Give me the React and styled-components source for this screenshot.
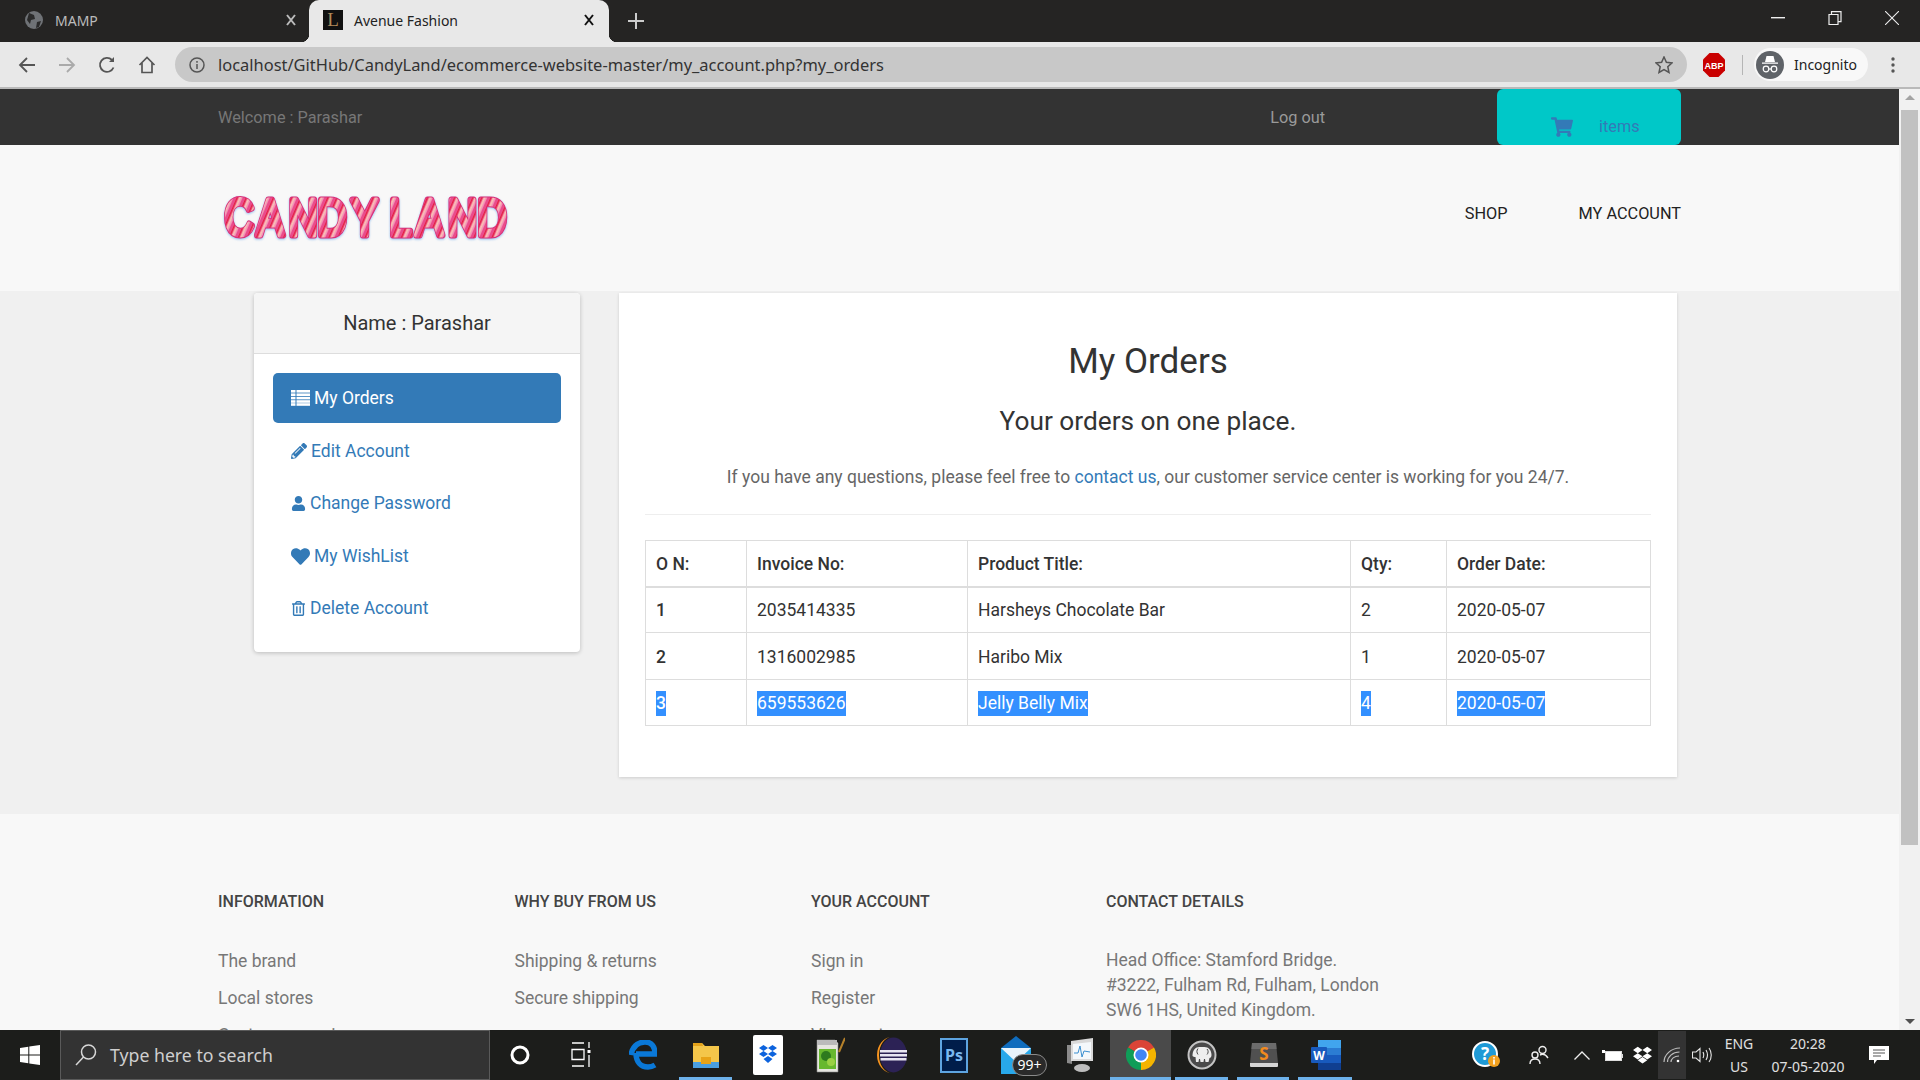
import React from "react";
import styled, { createGlobalStyle } from "styled-components";
import { FaPencilAlt, FaUser, FaHeart, FaRegTrashAlt, FaShoppingCart } from "react-icons/fa";

const GlobalStyle = createGlobalStyle`
  html, body { margin: 0; height: 100%; overflow: hidden; background: #f8f8f8; }
  * { box-sizing: border-box; }
`;

const winFont = `"Noto Sans", "Open Sans", sans-serif`;
const pageFont = `Roboto, "Liberation Sans", sans-serif`;

const Screen = styled.div`
  height: 1080px;
  display: flex;
  flex-direction: column;
  font-family: ${pageFont};
  font-size: 17.5px;
  line-height: 25px;
  color: #333;
`;

/* browser frame */
const TabStrip = styled.div`
  height: 42px;
  background: #252423;
  display: flex;
  align-items: stretch;
  font-family: ${winFont};
  font-size: 14px;
  flex-shrink: 0;
`;

const Tab = styled.div`
  position: relative;
  width: ${p => (p.$active ? "300px" : "309px")};
  display: flex;
  align-items: center;
  padding: ${p => (p.$active ? "0 15px 2px 14px" : "0 13px 2px 24px")};
  gap: 11px;
  color: ${p => (p.$active ? "#222" : "#bbb")};
  background: ${p => (p.$active ? "#e8e8e8" : "transparent")};
  border-radius: 10px 10px 0 0;
  ${p => p.$active && `
    &::before, &::after {
      content: "";
      position: absolute;
      bottom: 0;
      width: 8px;
      height: 8px;
    }
    &::before { left: -8px; background: radial-gradient(circle at 0 0, transparent 8px, #e8e8e8 8.5px); }
    &::after { right: -8px; background: radial-gradient(circle at 100% 0, transparent 8px, #e8e8e8 8.5px); }
  `}
`;

const TabTitle = styled.span`
  flex: 1;
`;

const Favicon = styled.span`
  width: 20px;
  height: 20px;
  background: #111;
  color: #b08a5a;
  font-family: "Liberation Serif", serif;
  font-size: 19px;
  line-height: 20px;
  text-align: center;
`;

const NewTab = styled.div`
  width: 54px;
  display: flex;
  align-items: center;
  justify-content: center;
`;

const WindowControls = styled.div`
  margin-left: auto;
  display: flex;
  align-items: flex-start;
`;

const WinButton = styled.div`
  width: 57px;
  height: 36px;
  display: flex;
  align-items: center;
  justify-content: center;
`;

const Toolbar = styled.div`
  height: 47px;
  flex-shrink: 0;
  background: #e8e8e8;
  border-bottom: 2px solid #b9b9b9;
  display: flex;
  align-items: center;
  padding: 0 0 0 7px;
`;

const NavBtn = styled.div`
  width: 40px;
  display: flex;
  justify-content: center;
`;

const Omnibox = styled.div`
  width: 1512px;
  height: 35px;
  margin-left: 8px;
  border-radius: 18px;
  background: #c8c8c8;
  display: flex;
  align-items: center;
  padding: 0 14px;
  font-family: ${winFont};
  font-size: 16.45px;
  color: #333;
`;

const Url = styled.span`
  margin-left: 13px;
  flex: 1;
`;

const ExtArea = styled.div`
  display: flex;
  align-items: center;
  margin-left: 16px;
`;

const Divider = styled.div`
  width: 1px;
  height: 20px;
  background: #b5b5b5;
  margin: 0 11px 0 17px;
`;

const IncognitoPill = styled.div`
  width: 114px;
  height: 33px;
  background: #f8f8f8;
  border-radius: 17px;
  display: flex;
  align-items: center;
  gap: 10px;
  padding-left: 2px;
  font-family: ${winFont};
  font-size: 14px;
  color: #222;
`;

const Dots = styled.div`
  margin-left: 23px;
  display: flex;
`;

/* page viewport */
const Viewport = styled.div`
  flex: 1;
  min-height: 0;
  display: flex;
`;

const Page = styled.div`
  flex: 1;
  min-width: 0;
  overflow: hidden;
`;

const Scrollbar = styled.div`
  width: 21px;
  background: #f1f1f1;
  display: flex;
  flex-direction: column;
  align-items: center;
  padding: 6px 0;
`;

const ScrollArrow = styled.div`
  width: 0;
  height: 0;
  border-left: 5px solid transparent;
  border-right: 5px solid transparent;
  ${p => (p.$down ? "border-top: 5px solid #505050;" : "border-bottom: 5px solid #a3a3a3;")}
`;

const ScrollThumb = styled.div`
  width: 17px;
  height: 735px;
  margin-top: 10px;
  margin-bottom: auto;
  background: #c1c1c1;
`;

const Container = styled.div`
  width: 1463px;
  margin: 0 auto;
`;

const TopBar = styled.div`
  height: 56px;
  background: #333;
  color: #777;
  font-size: 16.3px;
`;

const TopRow = styled(Container)`
  height: 100%;
  display: flex;
  align-items: center;
`;

const Welcome = styled.span`
  flex: 1;
`;

const LogOut = styled.span`
  color: #9a9a9a;
  margin-right: 172px;
`;

const CartBox = styled.div`
  width: 184px;
  height: 56px;
  background: #00c8c8;
  border-radius: 6px;
  display: flex;
  align-items: center;
  padding: 19px 0 0 54px;
  gap: 26px;
  color: #337ab7;
`;

const Header = styled.div`
  height: 146px;
  background: #f8f8f8;
`;

const HeaderRow = styled(Container)`
  height: 100%;
  display: flex;
  align-items: center;
  justify-content: space-between;
`;

const Logo = styled.svg`
  margin: 0 0 3px 2px;
  display: block;
  filter: drop-shadow(0 1px 1px rgba(110, 170, 235, 0.7));
`;

const Nav = styled.nav`
  display: flex;
  gap: 71px;
  padding-bottom: 10px;
  font-size: 16.3px;
  color: #222;
`;

const Content = styled.div`
  height: 523px;
  background: #f0f0f0;
  padding-top: 2px;
`;

const ContentRow = styled(Container)`
  display: flex;
  align-items: flex-start;
  padding-left: 36px;
  gap: 39px;
`;

const Sidebar = styled.aside`
  width: 326px;
  height: 359px;
  background: #fff;
  border-radius: 4px;
  box-shadow: 0 1px 4px rgba(0, 0, 0, 0.22);
  overflow: hidden;
`;

const SidebarHead = styled.div`
  height: 61px;
  background: #f5f5f5;
  border-bottom: 1px solid #ddd;
  display: flex;
  align-items: center;
  justify-content: center;
  font-size: 20px;
  color: #333;
`;

const Pills = styled.div`
  padding: 19px 19px;
  display: flex;
  flex-direction: column;
  gap: 2.5px;
`;

const Pill = styled.a`
  height: 50px;
  display: flex;
  align-items: center;
  gap: 4px;
  padding: ${p => (p.$active ? "0" : "1px")} 0 0 18px;
  border-radius: 5px;
  color: ${p => (p.$active ? "#fff" : "#337ab7")};
  background: ${p => (p.$active ? "#337ab7" : "transparent")};
`;

const Panel = styled.main`
  width: 1058px;
  height: 484px;
  background: #fff;
  box-shadow: 0 1px 3px rgba(0, 0, 0, 0.15);
  padding: 0 26px;
`;

const Title = styled.h1`
  margin: 0;
  padding-top: 44px;
  font-size: 35px;
  line-height: 50px;
  font-weight: 400;
  text-align: center;
  color: #333;
`;

const Subtitle = styled.h3`
  margin: 0;
  padding-top: 19px;
  font-size: 26.25px;
  line-height: 30px;
  font-weight: 400;
  text-align: center;
  color: #333;
`;

const Lead = styled.p`
  margin: 0;
  padding-top: 29px;
  text-align: center;
  color: #666;
`;

const InlineLink = styled.a`
  color: #337ab7;
`;

const Rule = styled.hr`
  margin: 24px 0 25px;
  border: 0;
  border-top: 1px solid #eee;
`;

const OrdersTable = styled.table`
  width: 1005px;
  table-layout: fixed;
  border-collapse: collapse;
`;

const Th = styled.th`
  height: 46px;
  padding: 2px 10px 0;
  text-align: left;
  font-weight: 500;
  border: 1px solid #ddd;
  border-bottom: 2px solid #ddd;
`;

const Td = styled.td`
  height: 46.4px;
  padding: 2px 10px 0;
  border: 1px solid #ddd;
  font-weight: ${p => (p.$bold ? 500 : 400)};
`;

const Selected = styled.span`
  display: inline-block;
  line-height: 25px;
  background: #3390ff;
  color: #fff;
`;

const Footer = styled.footer`
  background: #f8f8f8;
  padding-top: 75px;
`;

const FooterGrid = styled(Container)`
  display: grid;
  grid-template-columns: 296.5px 296.5px 295px 1fr;
`;

const FooterTitle = styled.h4`
  margin: 0 0 35px;
  font-size: 16px;
  line-height: 25px;
  font-weight: 500;
  color: #444;
`;

const FooterList = styled.div`
  display: flex;
  flex-direction: column;
  gap: 12px;
  color: #777;
`;

const Address = styled.div`
  margin-top: -1px;
  color: #777;
`;

/* taskbar */
const Taskbar = styled.div`
  height: 50px;
  flex-shrink: 0;
  background: #1c1d1b;
  display: flex;
  align-items: stretch;
  font-family: ${winFont};
  color: #e6e6e6;
`;

const StartButton = styled.div`
  width: 60px;
  display: flex;
  align-items: center;
  justify-content: center;
`;

const SearchBox = styled.div`
  width: 430px;
  background: #333;
  border: 1px solid #5a5a5a;
  display: flex;
  align-items: center;
  gap: 13px;
  padding-left: 14px;
  font-size: 17.7px;
  color: #cfcfcf;
`;

const Slot = styled.div`
  position: relative;
  width: ${p => p.$w || 62}px;
  display: flex;
  align-items: center;
  justify-content: center;
  background: ${p => (p.$active ? "#4a4a4a" : "transparent")};
  ${p => p.$open && `
    &::after {
      content: "";
      position: absolute;
      bottom: 0;
      left: ${p.$active ? 0 : 4}px;
      right: ${p.$active ? 0 : 5}px;
      height: 3px;
      background: #6db1ea;
    }
  `}
`;

const Badge = styled.span`
  position: absolute;
  right: 1px;
  top: 24px;
  width: 35px;
  height: 22px;
  border-radius: 11px;
  border: 1px solid #8a8a8a;
  background: #2a2a2a;
  color: #fff;
  font-size: 14px;
  line-height: 20px;
  text-align: center;
`;

const Tray = styled.div`
  margin-left: auto;
  margin-right: 18px;
  display: flex;
  align-items: stretch;
`;

const WifiSlot = styled(Slot)`
  background: #333;
  margin: 1px 0;
`;

const TwoLines = styled.div`
  width: ${p => p.$w}px;
  display: flex;
  flex-direction: column;
  align-items: center;
  justify-content: center;
  font-size: 14px;
  line-height: 23px;
  color: #e0e0e0;
`;

const ListIcon = () => (
  <svg width="19" height="16" viewBox="0 0 19 16" fill="currentColor">
    {[0, 3.4, 6.8, 10.2, 13.2].map(y => (
      <g key={y}>
        <rect x="0" y={y} width="4.5" height="2.6" />
        <rect x="5.5" y={y} width="13.5" height="2.6" />
      </g>
    ))}
  </svg>
);

const Close = ({ color }) => (
  <svg width="10" height="12" viewBox="0 0 10 12" stroke={color} strokeWidth="2" fill="none">
    <path d="M1 1l8 10M9 1L1 11" />
  </svg>
);

const Windows = () => (
  <svg width="20" height="20" viewBox="0 0 20 20" fill="#fff">
    <path d="M0 3l8.3-1.2v7.7H0zM9.3 1.6L20 0v9.5H9.3zM0 10.5h8.3v7.7L0 17zM9.3 10.5H20V20L9.3 18.4z" />
  </svg>
);

const SearchIcon = () => (
  <svg width="22" height="22" viewBox="0 0 22 22" fill="none" stroke="#d8d8d8" strokeWidth="1.5">
    <circle cx="13.5" cy="8" r="7" />
    <path d="M8.5 13L1 21" />
  </svg>
);

const Edge = () => (
  <svg width="28" height="30" viewBox="0 0 28 30" fill="none" stroke="#0a78d7">
    <path d="M2 15C4 4 12 2 16 2c7 0 10 5 10 12H7" strokeWidth="5.5" />
    <path d="M7 13c0 9 5 14 12 14 2 0 5-.8 7-2" strokeWidth="5.5" />
  </svg>
);

const Folder = () => (
  <svg width="26" height="28" viewBox="0 0 26 28">
    <path d="M0 2h9l3 3h14v21H0z" fill="#f4c64a" />
    <path d="M0 2h9l1 3H0z" fill="#e3a21a" />
    <rect x="0" y="21" width="26" height="6" fill="#4a9fe0" />
    <rect x="8" y="16" width="10" height="7" fill="#e8a317" />
  </svg>
);

const DropboxMark = ({ color, size }) => (
  <svg width={size} height={size * 0.92} viewBox="0 0 24 22" fill={color}>
    <path d="M6 1l6 4-6 4-6-4zM18 1l6 4-6 4-6-4zM6 9l6 4-6 4-6-4zM18 9l6 4-6 4-6-4zM12 14l6 4-6 4-6-4z" />
  </svg>
);

const DropboxTile = () => (
  <svg width="30" height="40" viewBox="0 0 30 40">
    <rect width="30" height="40" rx="2" fill="#fff" />
    <g fill="#0d63dd" transform="translate(6 10)">
      <path d="M4.5 0L9 3 4.5 6 0 3zM13.5 0L18 3l-4.5 3L9 3zM4.5 6L9 9l-4.5 3L0 9zM13.5 6L18 9l-4.5 3L9 9zM9 11l4.5 3L9 18l-4.5-4z" />
    </g>
  </svg>
);

const NotepadPP = () => (
  <svg width="30" height="36" viewBox="0 0 30 36">
    <path d="M2 3h18l3 3v29H2z" fill="#e6e6e0" stroke="#888" strokeWidth=".6" />
    <rect x="2" y="3" width="20" height="5" fill="#bbb" />
    <path d="M4 12h17v20H4z" fill="#67b82e" />
    <circle cx="11" cy="19" r="5" fill="#2d7a1e" />
    <circle cx="16" cy="25" r="4" fill="#9ad144" />
    <path d="M24 15L30 1" stroke="#b5812a" strokeWidth="2" />
  </svg>
);

const Eclipse = () => (
  <svg width="30" height="36" viewBox="0 0 30 36">
    <path d="M15 0a15 18 0 1 0 0 36a13 18 0 0 1 0-36z" fill="#f7941e" />
    <ellipse cx="16.5" cy="18" rx="13.5" ry="17.5" fill="#2c2255" />
    <g fill="#e8e6f2">
      <rect x="3" y="13" width="27" height="2.5" />
      <rect x="3" y="17" width="27" height="2.5" />
      <rect x="3.5" y="21" width="26" height="2.5" />
    </g>
  </svg>
);

const PsTile = styled.div`
  width: 28px;
  height: 35px;
  background: #001d4a;
  border: 2px solid #5ea4e0;
  color: #7ab8f0;
  font: 700 16px/31px ${winFont};
  text-align: center;
`;

const Mail = () => (
  <svg width="32" height="38" viewBox="0 0 32 38">
    <path d="M15 0l15 12H0z" fill="#0f6cbd" />
    <rect x="0" y="12" width="30" height="26" fill="#28a8ea" />
    <path d="M0 12h30L15 26z" fill="#e8f3fb" />
  </svg>
);

const Monitor = () => (
  <svg width="28" height="36" viewBox="0 0 28 36">
    <path d="M2 8v18l5 1V8z" fill="#8b8b8b" />
    <path d="M6 4l22-3v23L6 24z" fill="#d9d9d9" />
    <path d="M8 7l18-2v17L8 22z" fill="#f4f8fb" />
    <path d="M9 16l4 0 2-7 2 11 2-6 6 1" fill="none" stroke="#3b8fd0" strokeWidth="1" />
    <ellipse cx="17" cy="31" rx="8" ry="4" fill="#bdbdbd" />
  </svg>
);

const Chrome = () => (
  <svg width="30" height="30" viewBox="0 0 30 30">
    <path d="M15 15L2 7.5A15 15 0 0 1 28 7.5Z" fill="#db4437" />
    <path d="M15 15L28 7.5A15 15 0 0 1 15 30Z" fill="#f4b400" />
    <path d="M15 15L15 30A15 15 0 0 1 2 7.5Z" fill="#0f9d58" />
    <circle cx="15" cy="15" r="7.5" fill="#fff" />
    <circle cx="15" cy="15" r="5.8" fill="#4285f4" />
  </svg>
);

const Mamp = () => (
  <svg width="30" height="30" viewBox="0 0 30 30">
    <circle cx="15" cy="15" r="13.5" fill="#4a4a4a" stroke="#c4c4c4" strokeWidth="2" />
    <path d="M5.5 16c0-6 3-9 7-9h5c4 0 7 3 7 8 0 2-1 3-2 3l-1 4h-3l-.5-3h-1l-.5 3h-3l-.5-3h-1l-.5 3H9l-.5-5c-1 0-3-.5-3-1z" fill="#eee" />
    <path d="M11 8.500c-1.500 2-1.500 4 0 6M20 9c1.500 1.500 1.500 4 0 5.500" fill="none" stroke="#4a4a4a" strokeWidth="1" />
  </svg>
);

const Sublime = () => (
  <svg width="30" height="26" viewBox="0 0 30 26">
    <path d="M3 1h24l2 20H1z" fill="#505050" />
    <path d="M3 1h24l.6 6H2.400z" fill="#6b6b6b" />
    <path d="M1 21h28v3a1 1 0 0 1-1 1H2a1 1 0 0 1-1-1z" fill="#d6d6d6" />
    <text x="15" y="18" textAnchor="middle" fontSize="17" fontWeight="700" fill="#f28a1e" fontFamily="Noto Sans">S</text>
  </svg>
);

const Word = () => (
  <svg width="30" height="30" viewBox="0 0 30 30">
    <rect x="7" y="0" width="23" height="30" rx="1" fill="#2b7cd3" />
    <rect x="7" y="0" width="23" height="8" fill="#41a5ee" />
    <rect x="7" y="15" width="23" height="8" fill="#185abd" />
    <rect x="7" y="23" width="23" height="7" fill="#103f91" />
    <rect x="0" y="7" width="16" height="16" rx="1" fill="#185abd" />
    <text x="8" y="20" fill="#fff" fontSize="12" fontWeight="700" textAnchor="middle" fontFamily="Noto Sans">W</text>
  </svg>
);

const Help = () => (
  <svg width="28" height="28" viewBox="0 0 28 28">
    <circle cx="13" cy="13" r="12" fill="#1f9ad6" stroke="#fff" strokeWidth="2" />
    <text x="13" y="19" textAnchor="middle" fill="#fff" fontSize="17" fontWeight="700" fontFamily="Noto Sans">?</text>
    <circle cx="22" cy="20" r="6" fill="#f2a01e" />
    <rect x="21.2" y="18.5" width="1.6" height="5" fill="#fff" />
    <rect x="21.2" y="16" width="1.6" height="1.6" fill="#fff" />
  </svg>
);

const People = () => (
  <svg width="20" height="20" viewBox="0 0 20 20" fill="none" stroke="#eee" strokeWidth="1.4">
    <circle cx="13.5" cy="5" r="3.5" />
    <circle cx="6" cy="10" r="3" />
    <path d="M1 19c0-3 2-5 5-5s5 2 5 5M11 10c3-1.500 6 0 8 3" />
  </svg>
);

const Chevron = () => (
  <svg width="16" height="9" viewBox="0 0 16 9" fill="none" stroke="#eee" strokeWidth="1.3">
    <path d="M.5 8.500L8 1l7.500 7.500" />
  </svg>
);

const Battery = () => (
  <svg width="21" height="13" viewBox="0 0 21 13">
    <rect x="3.500" y="2.500" width="16" height="9" fill="#fff" stroke="#ddd" />
    <rect x="19.800" y="5" width="1.200" height="4" fill="#ddd" />
    <path d="M0 1h3v3H0z" fill="#fff" />
  </svg>
);

const Wifi = () => (
  <svg width="18" height="16" viewBox="0 0 18 16" fill="none" stroke="#bdbdbd" strokeWidth="1.2">
    <path d="M1 15C1 8 8 1 17 1M4.500 15c0-5 5-10 12-10M8 15c0-3 3-6 8-6" />
    <circle cx="15" cy="14" r="1.300" fill="#fff" stroke="none" />
  </svg>
);

const Speaker = () => (
  <svg width="20" height="16" viewBox="0 0 20 16" fill="none" stroke="#e6e6e6" strokeWidth="1.100">
    <path d="M.5 5h3.500l4-3.500v13l-4-3.500H.5zM11 5c1 2 1 4 0 6M14 3c1.800 3 1.800 7 0 10M17 1c3 4 3 10 0 14" />
  </svg>
);

const NoteBubble = () => (
  <svg width="20" height="18" viewBox="0 0 20 18">
    <path d="M0 0h20v14H8l-3 4v-4H0z" fill="#fff" />
    <path d="M4 4h12M4 7h12M4 10h8" stroke="#555" strokeWidth="1" />
  </svg>
);

const rows = [
  { n: "1", inv: "2035414335", title: "Harsheys Chocolate Bar", qty: "2" },
  { n: "2", inv: "1316002985", title: "Haribo Mix", qty: "1" },
  { n: "3", inv: "659553626", title: "Jelly Belly Mix", qty: "4", picked: true },
];

const footerCols = [
  { title: "INFORMATION", items: ["The brand", "Local stores", "Customer service"] },
  { title: "WHY BUY FROM US", items: ["Shipping & returns", "Secure shipping"] },
  { title: "YOUR ACCOUNT", items: ["Sign in", "Register", "View cart"] },
];

// glyph positions in the squeezed logo text, space included
const logoX = "6 46 86 122 164 190 212 245 285 322";

const Cell = ({ picked, children, ...rest }) => (
  <Td {...rest}>{picked ? <Selected>{children}</Selected> : children}</Td>
);

export default function App() {
  return (
    <Screen>
      <GlobalStyle />
      <TabStrip>
        <Tab>
          <svg width="20" height="20" viewBox="0 0 20 20">
            <circle cx="10" cy="10" r="9" fill="#6f7276" />
            <path d="M5 3l5 2 1 4-4 1-1 4-3-4zM13 12l4-1-2 6-3 1z" fill="#2a2a2a" />
          </svg>
          <TabTitle>MAMP</TabTitle>
          <Close color="#bbb" />
        </Tab>
        <Tab $active>
          <Favicon>L</Favicon>
          <TabTitle>Avenue Fashion</TabTitle>
          <Close color="#111" />
        </Tab>
        <NewTab>
          <svg width="16" height="16" viewBox="0 0 16 16" stroke="#ccc" strokeWidth="2">
            <path d="M8 0v16M0 8h16" />
          </svg>
        </NewTab>
        <WindowControls>
          <WinButton>
            <svg width="14" height="2" viewBox="0 0 14 2"><rect width="14" height="1.400" fill="#eee" /></svg>
          </WinButton>
          <WinButton>
            <svg width="14" height="14" viewBox="0 0 14 14" fill="none" stroke="#eee" strokeWidth="1.200">
              <path d="M1 3.500h9v10H1zM3.500 3.500V.7H13v10h-3" />
            </svg>
          </WinButton>
          <WinButton>
            <svg width="14" height="14" viewBox="0 0 14 14" stroke="#eee" strokeWidth="1.100">
              <path d="M0 0l14 14M14 0L0 14" />
            </svg>
          </WinButton>
        </WindowControls>
      </TabStrip>

      <Toolbar>
        <NavBtn>
          <svg width="18" height="16" viewBox="0 0 18 16" fill="none" stroke="#555" strokeWidth="1.800">
            <path d="M17 8H2M9 1L2 8l7 7" />
          </svg>
        </NavBtn>
        <NavBtn>
          <svg width="18" height="16" viewBox="0 0 18 16" fill="none" stroke="#aaa" strokeWidth="1.800">
            <path d="M1 8h15M9 1l7 7-7 7" />
          </svg>
        </NavBtn>
        <NavBtn>
          <svg width="18" height="18" viewBox="0 0 18 18" fill="none" stroke="#555" strokeWidth="1.800">
            <path d="M15.500 11.500A7 7 0 1 1 14 4" />
            <path d="M16 1v5h-5z" fill="#555" stroke="none" />
          </svg>
        </NavBtn>
        <NavBtn>
          <svg width="18" height="18" viewBox="0 0 18 18" fill="none" stroke="#555" strokeWidth="1.700">
            <path d="M1.500 9L9 1.500 16.500 9M4 7v9.500h10V7" />
          </svg>
        </NavBtn>
        <Omnibox>
          <svg width="16" height="16" viewBox="0 0 16 16" fill="none" stroke="#555" strokeWidth="1.500">
            <circle cx="8" cy="8" r="7" />
            <path d="M8 7v5M8 4v1.700" />
          </svg>
          <Url>localhost/GitHub/CandyLand/ecommerce-website-master/my_account.php?my_orders</Url>
          <svg width="18" height="18" viewBox="0 0 18 18" fill="none" stroke="#555" strokeWidth="1.500">
            <path d="M9 1l2.400 5.300 5.600.6-4.200 3.800 1.200 5.700L9 13.500l-5 2.900 1.200-5.700L1 6.900l5.600-.6z" />
          </svg>
        </Omnibox>
        <ExtArea>
          <svg width="22" height="24" viewBox="0 0 22 24">
            <path d="M6.500 0h9L22 6.500v11L15.500 24h-9L0 17.500v-11z" fill="#c90000" />
            <text x="11" y="15.500" textAnchor="middle" fill="#fff" fontSize="9" fontWeight="700" fontFamily="Liberation Sans">ABP</text>
          </svg>
          <Divider />
          <IncognitoPill>
            <svg width="28" height="28" viewBox="0 0 28 28">
              <circle cx="14" cy="14" r="14" fill="#5f6368" />
              <path d="M9 11l1.500-6h7L19 11zM6 11.500h16v1.300H6z" fill="#fff" />
              <g fill="none" stroke="#fff" strokeWidth="1.200">
                <circle cx="10" cy="18" r="2.800" />
                <circle cx="18" cy="18" r="2.800" />
                <path d="M12.800 18h2.400" />
              </g>
            </svg>
            Incognito
          </IncognitoPill>
          <Dots>
            <svg width="4" height="16" viewBox="0 0 4 16" fill="#555">
              <circle cx="2" cy="2" r="1.700" />
              <circle cx="2" cy="8" r="1.700" />
              <circle cx="2" cy="14" r="1.700" />
            </svg>
          </Dots>
        </ExtArea>
      </Toolbar>

      <Viewport>
        <Page>
          <TopBar>
            <TopRow>
              <Welcome>Welcome : Parashar</Welcome>
              <LogOut>Log out</LogOut>
              <CartBox>
                <FaShoppingCart size={22} />
                <span>items</span>
              </CartBox>
            </TopRow>
          </TopBar>

          <Header>
            <HeaderRow>
              <Logo width="292" height="46" viewBox="0 0 292 46">
                <defs>
                  <pattern id="candy" width="10" height="10" patternUnits="userSpaceOnUse" patternTransform="rotate(28)">
                    <rect width="10" height="10" fill="#ea4c8c" />
                    <rect x="0" width="1.500" height="10" fill="#e3233f" />
                    <rect x="2.500" width="2" height="10" fill="#fbc3b4" />
                    <rect x="5" width="1" height="10" fill="#fff0e8" />
                  </pattern>
                </defs>
                <g transform="scale(0.8 1)" fontFamily="Liberation Sans" fontSize="50" strokeLinejoin="round" strokeLinecap="round">
                  <text x={logoX} y="41" fill="none" stroke="#d92f78" strokeWidth="7">CANDY LAND</text>
                  <text x={logoX} y="41" fill="url(#candy)" stroke="url(#candy)" strokeWidth="5">CANDY LAND</text>
                </g>
              </Logo>
              <Nav>
                <span>SHOP</span>
                <span>MY ACCOUNT</span>
              </Nav>
            </HeaderRow>
          </Header>

          <Content>
            <ContentRow>
              <Sidebar>
                <SidebarHead>Name : Parashar</SidebarHead>
                <Pills>
                  <Pill $active><ListIcon /> My Orders</Pill>
                  <Pill><FaPencilAlt size={16} /> Edit Account</Pill>
                  <Pill><FaUser size={15} /> Change Password</Pill>
                  <Pill><FaHeart size={19} /> My WishList</Pill>
                  <Pill><FaRegTrashAlt size={15} /> Delete Account</Pill>
                </Pills>
              </Sidebar>

              <Panel>
                <Title>My Orders</Title>
                <Subtitle>Your orders on one place.</Subtitle>
                <Lead>
                  If you have any questions, please feel free to <InlineLink>contact us</InlineLink>, our customer service center is working for you 24/7.
                </Lead>
                <Rule />
                <OrdersTable>
                  <colgroup>
                    <col width="101" />
                    <col width="221" />
                    <col width="383" />
                    <col width="96" />
                    <col width="204" />
                  </colgroup>
                  <thead>
                    <tr>
                      <Th>O N:</Th>
                      <Th>Invoice No:</Th>
                      <Th>Product Title:</Th>
                      <Th>Qty:</Th>
                      <Th>Order Date:</Th>
                    </tr>
                  </thead>
                  <tbody>
                    {rows.map(r => (
                      <tr key={r.n}>
                        <Cell $bold picked={r.picked}>{r.n}</Cell>
                        <Cell picked={r.picked}>{r.inv}</Cell>
                        <Cell picked={r.picked}>{r.title}</Cell>
                        <Cell picked={r.picked}>{r.qty}</Cell>
                        <Cell picked={r.picked}>2020-05-07</Cell>
                      </tr>
                    ))}
                  </tbody>
                </OrdersTable>
              </Panel>
            </ContentRow>
          </Content>

          <Footer>
            <FooterGrid>
              {footerCols.map(col => (
                <div key={col.title}>
                  <FooterTitle>{col.title}</FooterTitle>
                  <FooterList>
                    {col.items.map(i => <span key={i}>{i}</span>)}
                  </FooterList>
                </div>
              ))}
              <div>
                <FooterTitle>CONTACT DETAILS</FooterTitle>
                <Address>
                  Head Office: Stamford Bridge.<br />
                  #3222, Fulham Rd, Fulham, London<br />
                  SW6 1HS, United Kingdom.
                </Address>
              </div>
            </FooterGrid>
          </Footer>
        </Page>
        <Scrollbar>
          <ScrollArrow />
          <ScrollThumb />
          <ScrollArrow $down />
        </Scrollbar>
      </Viewport>

      <Taskbar>
        <StartButton><Windows /></StartButton>
        <SearchBox>
          <SearchIcon />
          Type here to search
        </SearchBox>
        <Slot $w={60}>
          <svg width="20" height="20" viewBox="0 0 20 20" fill="none" stroke="#fff" strokeWidth="3">
            <circle cx="10" cy="10" r="8" />
          </svg>
        </Slot>
        <Slot $w={61}>
          <svg width="20" height="26" viewBox="0 0 20 26" fill="none" stroke="#fff" strokeWidth="1.300">
            <path d="M1 1h12M1 7.500h12v10H1zM1 24h12M18 0v6M18 13v12" />
            <rect x="16.500" y="8" width="3" height="3" fill="#fff" stroke="none" />
          </svg>
        </Slot>
        <Slot $w={64}><Edge /></Slot>
        <Slot $w={62} $open><Folder /></Slot>
        <Slot><DropboxTile /></Slot>
        <Slot $w={61}><NotepadPP /></Slot>
        <Slot $w={63}><Eclipse /></Slot>
        <Slot><PsTile>Ps</PsTile></Slot>
        <Slot $w={63}>
          <Mail />
          <Badge>99+</Badge>
        </Slot>
        <Slot><Monitor /></Slot>
        <Slot $w={61} $active $open><Chrome /></Slot>
        <Slot $open><Mamp /></Slot>
        <Slot $w={61} $open><Sublime /></Slot>
        <Slot $w={63} $open><Word /></Slot>
        <Tray>
          <Slot $w={52}><Help /></Slot>
          <Slot $w={54}><People /></Slot>
          <Slot $w={32}><Chevron /></Slot>
          <Slot $w={29}><Battery /></Slot>
          <Slot $w={31}><DropboxMark color="#fff" size={19} /></Slot>
          <WifiSlot $w={28}><Wifi /></WifiSlot>
          <Slot $w={32}><Speaker /></Slot>
          <TwoLines $w={42}><span>ENG</span><span>US</span></TwoLines>
          <TwoLines $w={96}><span>20:28</span><span>07-05-2020</span></TwoLines>
          <Slot $w={46}><NoteBubble /></Slot>
        </Tray>
      </Taskbar>
    </Screen>
  );
}
